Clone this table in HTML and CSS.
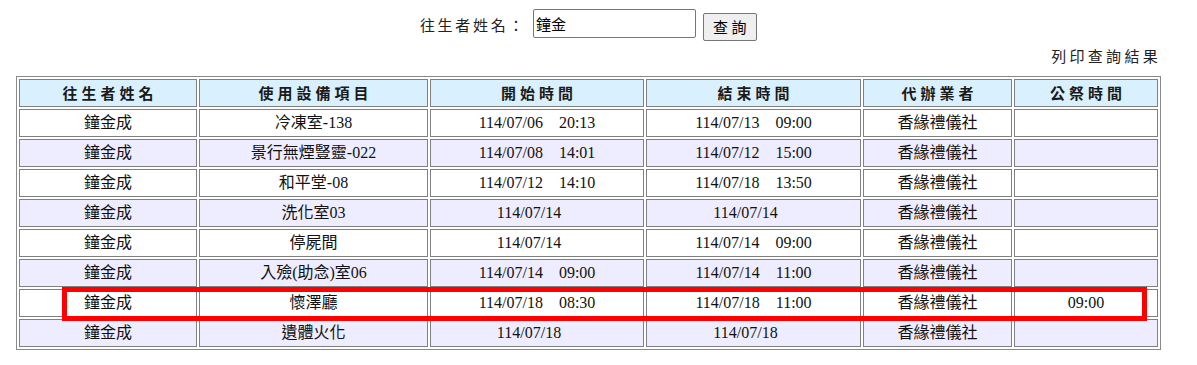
FILE: index.html
```html
<!DOCTYPE html>
<html lang="zh-Hant">
<head>
<meta charset="utf-8">
<title>查詢</title>
<link rel="stylesheet" href="styles.css">
</head>
<body>
<div class="page">
  <form class="search">
    <span class="label">往生者姓名：</span>
    <input class="name-input" type="text" value="鐘金">
    <button class="btn" type="button">查詢</button>
  </form>
  <div class="print">列印查詢結果</div>
  <table class="result">
    <colgroup>
      <col class="c1"><col class="c2"><col class="c3"><col class="c4"><col class="c5"><col class="c6">
    </colgroup>
    <thead>
      <tr><th>往生者姓名</th><th>使用設備項目</th><th>開始時間</th><th>結束時間</th><th>代辦業者</th><th>公祭時間</th></tr>
    </thead>
    <tbody>
      <tr><td>鐘金成</td><td>冷凍室-138</td><td>114/07/06　20:13</td><td>114/07/13　09:00</td><td>香緣禮儀社</td><td></td></tr>
      <tr class="alt"><td>鐘金成</td><td>景行無煙豎靈-022</td><td>114/07/08　14:01</td><td>114/07/12　15:00</td><td>香緣禮儀社</td><td></td></tr>
      <tr><td>鐘金成</td><td>和平堂-08</td><td>114/07/12　14:10</td><td>114/07/18　13:50</td><td>香緣禮儀社</td><td></td></tr>
      <tr class="alt"><td>鐘金成</td><td>洗化室03</td><td>114/07/14　</td><td>114/07/14　</td><td>香緣禮儀社</td><td></td></tr>
      <tr><td>鐘金成</td><td>停屍間</td><td>114/07/14　</td><td>114/07/14　09:00</td><td>香緣禮儀社</td><td></td></tr>
      <tr class="alt"><td>鐘金成</td><td>入殮(助念)室06</td><td>114/07/14　09:00</td><td>114/07/14　11:00</td><td>香緣禮儀社</td><td></td></tr>
      <tr><td>鐘金成</td><td>懷澤廳</td><td>114/07/18　08:30</td><td>114/07/18　11:00</td><td>香緣禮儀社</td><td>09:00</td></tr>
      <tr class="alt"><td>鐘金成</td><td>遺體火化</td><td>114/07/18　</td><td>114/07/18　</td><td>香緣禮儀社</td><td></td></tr>
    </tbody>
  </table>
  <div class="highlight"></div>
</div>
</body>
</html>
```

FILE: styles.css
```css
html, body {
  margin: 0;
  padding: 0;
  background: #ffffff;
}

body {
  font-family: "Liberation Serif", "Noto Sans CJK TC", serif;
  color: #111;
}

.page {
  position: relative;
  width: 1145px;
  margin-left: 16px;
}

.search {
  display: flex;
  justify-content: center;
  align-items: flex-start;
  padding-top: 9px;
  margin: 0;
  height: 32px;
}

.label {
  font-family: "Noto Sans CJK TC", sans-serif;
  font-size: 15px;
  letter-spacing: 2.7px;
  line-height: 29px;
  margin-top: 1px;
  margin-right: 7px;
  color: #222;
}

.name-input {
  box-sizing: border-box;
  width: 163px;
  height: 29px;
  border: 1px solid #767676;
  border-radius: 2px;
  padding: 0 2px;
  font-family: "Noto Sans CJK TC", sans-serif;
  font-size: 15px;
  color: #000;
  margin: 0 7px 0 0;
}

.btn {
  box-sizing: border-box;
  width: 54px;
  height: 28px;
  margin-top: 4px;
  padding: 0 0 0 3px;
  border: 1px solid #767676;
  border-radius: 2px;
  background: #efefef;
  font-family: "Noto Sans CJK TC", sans-serif;
  font-size: 15px;
  letter-spacing: 3.5px;
  line-height: 26px;
  color: #000;
}

.print {
  margin-top: 6px;
  text-align: right;
  font-family: "Noto Sans CJK TC", sans-serif;
  font-size: 15px;
  letter-spacing: 3.3px;
  line-height: 18px;
  height: 18px;
  color: #222;
}

.result {
  margin-top: 11px;
  width: 1145px;
  table-layout: fixed;
  border-collapse: separate;
  border-spacing: 2px;
  border: 1px solid #8a8a8a;
}

.c1 { width: 178px; }
.c2 { width: 229px; }
.c3 { width: 214px; }
.c4 { width: 215px; }
.c5 { width: 149px; }
.c6 { width: 144px; }

.result th,
.result td {
  box-sizing: border-box;
  height: 28px;
  padding: 0;
  border: 1px solid #808080;
  text-align: center;
  vertical-align: middle;
  font-size: 16px;
  line-height: 18px;
  white-space: pre;
}

.result th {
  background: #d9f0fe;
  font-family: "Noto Sans CJK TC", sans-serif;
  font-weight: bold;
  font-size: 15px;
  letter-spacing: 4px;
  padding-left: 4px;
  color: #1a1a1a;
}

.result td {
  background: #ffffff;
  color: #111;
}

.result tr.alt td {
  background: #eeecff;
}

.highlight {
  position: absolute;
  left: 46px;
  top: 287px;
  width: 1085px;
  height: 34px;
  box-sizing: border-box;
  border: 5px solid #ff0000;
  pointer-events: none;
}
```
